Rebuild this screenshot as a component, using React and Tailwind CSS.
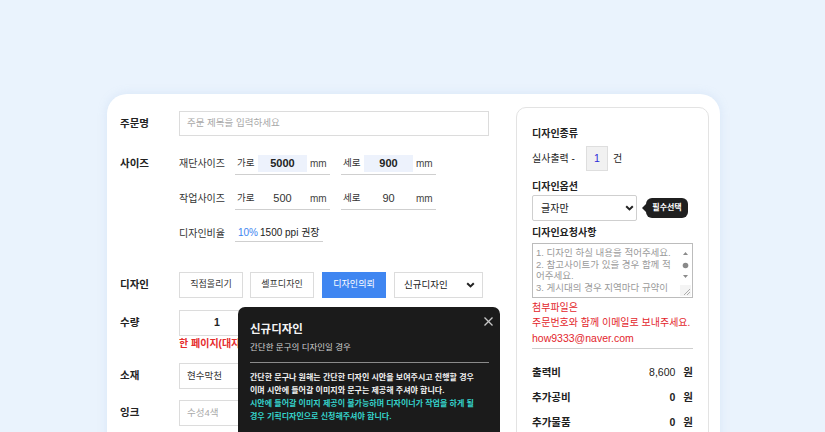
import React from "react";

function Chevron() {
  return (
    <svg width="9" height="6" viewBox="0 0 9 6">
      <polyline points="1.2,1.2 4.5,4.4 7.8,1.2" fill="none" stroke="#222" strokeWidth="2" />
    </svg>
  );
}

function SizeGroup({ label, value, strong }) {
  return (
    <div className="flex items-center w-[95px] h-[23px] border-b border-[#cfcfcf] pl-[2px]">
      <span className="w-[21px] text-[9.5px] text-[#333]">{label}</span>
      {strong ? (
        <span className="w-[49px] h-[17px] flex items-center justify-center text-[11px] font-bold text-[#222] bg-[#edf2fc]">
          {value}
        </span>
      ) : (
        <span className="w-[49px] h-[17px] flex items-center justify-center text-[11px] text-[#333]">
          {value}
        </span>
      )}
      <span className="ml-[3px] text-[10px] text-[#444]">mm</span>
    </div>
  );
}

function Label({ children }) {
  return (
    <div className="w-[59px] h-[26px] flex items-center text-[10.5px] font-bold text-[#222]">
      {children}
    </div>
  );
}

export default function App() {
  return (
    <div className="w-[825px] h-[432px] overflow-hidden bg-[#eaf3fd] font-[family-name:Liberation_Sans,Noto_Sans_CJK_KR,sans-serif]">
      <div className="relative mt-[94px] ml-[107px] w-[613px] h-[380px] bg-white rounded-[20px] shadow-[0_0_10px_rgba(160,190,230,0.25)] flex items-start pl-[13px] pr-[11px] pt-[13px]">
        {/* Left column */}
        <div className="w-[369px] mt-[4px] flex flex-col">
          {/* 주문명 */}
          <div className="flex items-center h-[25px]">
            <Label>주문명</Label>
            <div className="w-[310px] h-[25px] border border-[#dcdcdc] flex items-center pl-[7px] text-[9.5px] text-[#a8a8a8]">
              주문 제목을 입력하세요
            </div>
          </div>

          {/* 사이즈 */}
          <div className="flex items-start mt-[16px]">
            <div className="w-[59px] h-[23px] flex items-center text-[10.5px] font-bold text-[#222]">사이즈</div>
            <div className="flex flex-col">
              <div className="flex items-center">
                <span className="w-[56px] text-[10px] text-[#333]">재단사이즈</span>
                <SizeGroup label="가로" value="5000" strong />
                <div className="w-[11px]" />
                <SizeGroup label="세로" value="900" strong />
              </div>
              <div className="flex items-center mt-[12px]">
                <span className="w-[56px] text-[10px] text-[#333]">작업사이즈</span>
                <SizeGroup label="가로" value="500" />
                <div className="w-[11px]" />
                <SizeGroup label="세로" value="90" />
              </div>
              <div className="flex items-center mt-[14px]">
                <span className="w-[56px] text-[10px] text-[#333]">디자인비율</span>
                <div className="w-[88px] h-[18px] border-b border-[#cfcfcf] pl-[3px] flex items-center text-[10px] text-[#222] whitespace-nowrap">
                  <span className="text-[#3d85f0]">10%</span>
                  <span className="ml-[2px]">1500 ppi 권장</span>
                </div>
              </div>
            </div>
          </div>

          {/* 디자인 */}
          <div className="flex items-center mt-[30px]">
            <Label>디자인</Label>
            <div className="w-[64px] h-[26px] border border-[#dcdcdc] flex items-center justify-center text-[9px] text-[#333]">직접올리기</div>
            <div className="ml-[7px] w-[64px] h-[26px] border border-[#dcdcdc] flex items-center justify-center text-[9px] text-[#333]">셀프디자인</div>
            <div className="ml-[8px] w-[64px] h-[26px] bg-[#3f86f1] flex items-center justify-center text-[9px] text-white">디자인의뢰</div>
            <div className="ml-[8px] w-[89px] h-[26px] border border-[#dcdcdc] flex items-center justify-between pl-[9px] pr-[7px] text-[9.5px] text-[#222]">
              <span>신규디자인</span>
              <Chevron />
            </div>
          </div>

          {/* 수량 */}
          <div className="flex items-start mt-[12px]">
            <Label>수량</Label>
            <div className="flex flex-col">
              <div className="w-[76px] h-[26px] border border-[#dcdcdc] flex items-center justify-center text-[10.5px] font-bold text-[#222]">1</div>
              <div className="mt-[1px] w-[59px] overflow-hidden leading-[14px] text-[10px] font-bold text-[#e52b2b] whitespace-nowrap">한 페이지(대지</div>
            </div>
          </div>

          {/* 소재 */}
          <div className="flex items-center mt-[12px]">
            <Label>소재</Label>
            <div className="w-[310px] h-[26px] border border-[#dcdcdc] flex items-center pl-[7px] text-[9.5px] text-[#333]">현수막천</div>
          </div>

          {/* 잉크 */}
          <div className="flex items-center mt-[11px]">
            <Label>잉크</Label>
            <div className="w-[310px] h-[26px] border border-[#dcdcdc] flex items-center pl-[7px] text-[9.5px] text-[#aaa]">수성4색</div>
          </div>
        </div>

        {/* Right panel */}
        <div className="ml-[27px] w-[193px] h-[360px] border border-[#e3e3e3] rounded-[10px] px-[15px] pt-[18px] flex flex-col">
          <div className="text-[10px] font-bold leading-[16px] text-[#222]">디자인종류</div>
          <div className="mt-[4px] h-[25px] flex items-center text-[10px] text-[#222]">
            <span className="w-[54px]">실사출력 -</span>
            <div className="w-[22px] h-[25px] bg-[#f1f1f1] border border-[#dedede] flex items-center justify-center text-[10.5px] text-[#2b2bd8]">1</div>
            <span className="ml-[5px]">건</span>
          </div>
          <div className="mt-[8px] text-[10px] font-bold leading-[16px] text-[#222]">디자인옵션</div>
          <div className="flex items-center">
            <div className="w-[105px] h-[26px] border border-[#cfcfcf] rounded-[2px] flex items-center justify-between pl-[8px] pr-[2px] text-[10px] text-[#222]">
              <span>글자만</span>
              <Chevron />
            </div>
            <div className="ml-[5px] w-0 h-0 border-y-[4px] border-y-transparent border-r-[4px] border-r-[#1f1f1f]" />
            <div className="w-[42px] h-[20px] bg-[#1f1f1f] rounded-[6px] flex items-center justify-center text-[8px] font-bold text-white">필수선택</div>
          </div>
          <div className="mt-[4px] text-[10px] font-bold leading-[16px] text-[#222]">디자인요청사항</div>
          <div className="relative mt-[2px] w-[161px] h-[55px] border border-[#bcbcbc] overflow-hidden pl-[3px] pt-[3px] text-[9.5px] leading-[11.5px] text-[#9a9a9a]">
            <div className="whitespace-nowrap">1. 디자인 하실 내용을 적어주세요.</div>
            <div className="whitespace-nowrap">2. 참고사이트가 있을 경우 함께 적</div>
            <div className="whitespace-nowrap">어주세요.</div>
            <div className="whitespace-nowrap">3. 게시대의 경우 지역마다 규약이</div>
            <svg className="absolute right-0 top-0" width="13" height="53" viewBox="0 0 13 53">
              <rect x="0" y="0" width="13" height="53" fill="#ffffff" />
              <polygon points="4,11 6.5,8 9,11" fill="#8a8a8a" />
              <circle cx="6.5" cy="21.5" r="2.8" fill="#8a8a8a" />
              <polygon points="4,31 6.5,34 9,31" fill="#8a8a8a" />
              <rect x="1" y="41" width="11" height="11" fill="#f4f4f4" />
              <line x1="5" y1="51" x2="11" y2="45" stroke="#999" strokeWidth="0.8" />
              <line x1="8" y1="51" x2="11" y2="48" stroke="#999" strokeWidth="0.8" />
            </svg>
          </div>
          <div className="mt-[2px] leading-[15px] text-[10px] text-[#e3262c]">첨부파일은</div>
          <div className="leading-[15px] text-[10px] text-[#e3262c] whitespace-nowrap">주문번호와 함께 이메일로 보내주세요.</div>
          <div className="leading-[17px] text-[10.5px] text-[#e3262c]">how9333@naver.com</div>
          <div className="mt-[1px] w-[161px] border-t border-[#cfcfcf]" />
          <div className="mt-[11px] w-[161px] h-[25px] flex items-center justify-between text-[10.5px] text-[#222]">
            <span className="font-bold">출력비</span>
            <span><span>8,600</span><span className="ml-[8px] font-bold">원</span></span>
          </div>
          <div className="w-[161px] h-[25px] flex items-center justify-between text-[10.5px] text-[#222]">
            <span className="font-bold">추가공비</span>
            <span><span className="font-bold">0</span><span className="ml-[8px] font-bold">원</span></span>
          </div>
          <div className="w-[161px] h-[25px] flex items-center justify-between text-[10.5px] text-[#222]">
            <span className="font-bold">추가물품</span>
            <span><span className="font-bold">0</span><span className="ml-[8px] font-bold">원</span></span>
          </div>
        </div>

        {/* Tooltip */}
        <div className="absolute left-[131px] top-[213px] w-[262px] h-[200px] bg-[#1b1b1b] rounded-[7px] pl-[12px] pt-[14px]">
          <svg className="absolute left-[246px] top-[10px]" width="9" height="9" viewBox="0 0 9 9">
            <line x1="0.5" y1="0.5" x2="8.5" y2="8.5" stroke="#c8c8c8" strokeWidth="1.2" />
            <line x1="8.5" y1="0.5" x2="0.5" y2="8.5" stroke="#c8c8c8" strokeWidth="1.2" />
          </svg>
          <div className="leading-[16px] text-[11.5px] font-semibold text-[#f4f4f4]">신규디자인</div>
          <div className="mt-[3px] leading-[14px] text-[8.5px] text-[#d2d2d2]">간단한 문구의 디자인일 경우</div>
          <div className="mt-[8px] w-[239px] h-px bg-[#8a8a8a]" />
          <div className="mt-[8px] text-[8px] leading-[13px] font-semibold whitespace-nowrap">
            <div className="text-[#f2f2f2]">간단한 문구나 원해는 간단한 디자인 시안을 보여주시고 진행할 경우</div>
            <div className="text-[#f2f2f2]">이며 시안에 들어갈 이미지와 문구는 제공해 주셔야 합니다.</div>
            <div className="text-[#35d3cb]">시안에 들어갈 이미지 제공이 불가능하며 디자이너가 작업을 하게 될</div>
            <div className="text-[#35d3cb]">경우 기획디자인으로 신청해주셔야 합니다.</div>
          </div>
        </div>
      </div>
    </div>
  );
}
